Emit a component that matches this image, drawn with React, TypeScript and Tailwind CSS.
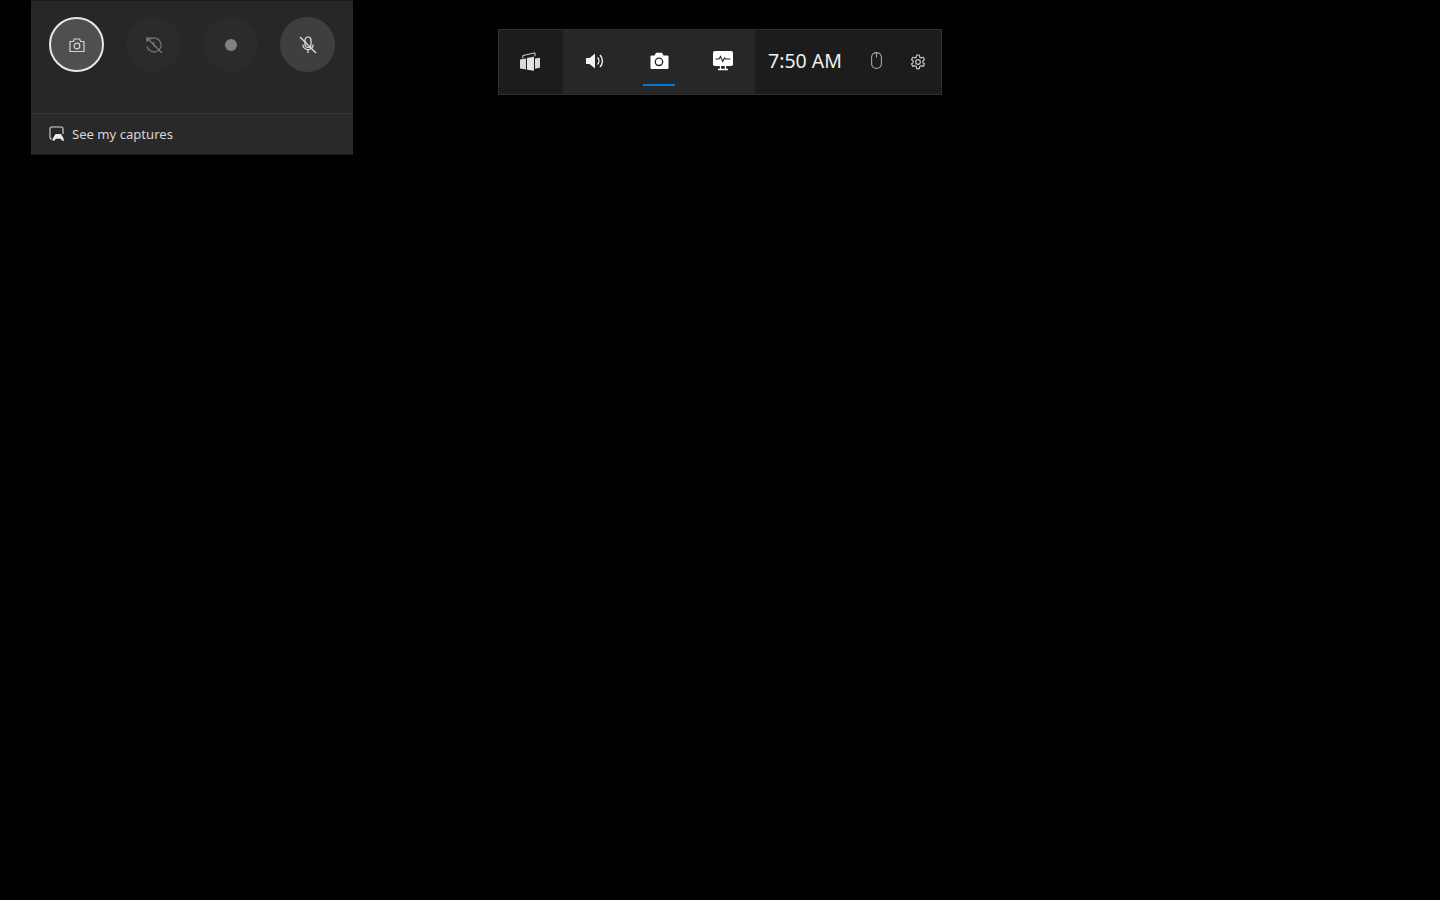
import React from 'react';

function CameraOutline() {
  return (
    <svg width="16" height="16" viewBox="0 0 16 16" fill="none" stroke="#d2d2d2" strokeWidth="1.2">
      <path d="M1 4.500h3.400l1-2.500h5.200l1 2.500H15v10H1z" strokeLinejoin="round" />
      <circle cx="8" cy="9" r="2.800" />
    </svg>
  );
}

function ReplayOff() {
  return (
    <svg width="18" height="18" viewBox="0 0 18 18" fill="none" stroke="#787878" strokeWidth="1.200">
      <path d="M5 3.200A7 7 0 1 1 2.200 10.500" />
      <path d="M1 1.500h5.500L1.500 6.500z" fill="#787878" stroke="none" />
      <path d="M8.800 6v3.500l2.300 1.500" />
      <path d="M2 2l15 15" />
    </svg>
  );
}

function MicOff() {
  return (
    <svg width="18" height="18" viewBox="0 0 18 18" fill="none" stroke="#e2e2e2" strokeWidth="1.200">
      <rect x="6" y="1" width="6" height="10.500" rx="3" />
      <path d="M3.800 8.500a5.200 5.200 0 0 0 10.400 0" />
      <path d="M9 13.700v3.300" />
      <path d="M1 1l16 16" />
    </svg>
  );
}

function CapturesIcon() {
  return (
    <svg width="16" height="16" viewBox="0 0 16 16" fill="none">
      <path d="M3.500 13H2.400A1.400 1.400 0 0 1 1 11.600V2.400A1.400 1.400 0 0 1 2.400 1h10.200A1.400 1.400 0 0 1 14 2.400V8" stroke="#d8d8d8" strokeWidth="1.100" />
      <path d="M6.500 8h5.500l2.300 3.800.7 3.200-2-.4-1.500-1.800H7l-1.500 1.800-2 .4.700-3.200z" fill="#ececec" />
    </svg>
  );
}

function WidgetsIcon() {
  return (
    <svg width="20" height="20" viewBox="0 0 20 20" fill="none">
      <path d="M0 7.500l6-1v11l-6-1z" fill="#dadada" />
      <path d="M7 6l7-1.200v14L7 17.700z" fill="#e4e4e4" />
      <path d="M15 6.500l5-.8v10l-5 1z" fill="#dadada" />
      <path d="M2.800 6.400V3.600L15 .8v3.500" stroke="#d4d4d4" strokeWidth="1" />
    </svg>
  );
}

function SpeakerIcon() {
  return (
    <svg width="20" height="18" viewBox="0 0 20 18" fill="none">
      <path d="M1 6h3.500L10 1.500v15L4.500 12H1z" fill="#f2f2f2" />
      <path d="M12.500 5.500a5 5 0 0 1 0 7" stroke="#f2f2f2" strokeWidth="1.400" />
      <path d="M15 3a8.600 8.600 0 0 1 0 12" stroke="#f2f2f2" strokeWidth="1.400" />
    </svg>
  );
}

function CameraFilled() {
  return (
    <svg width="20" height="18" viewBox="0 0 20 18" fill="none">
      <path d="M1.500 3.500h4l1.500-2.800h6l1.500 2.800h4a1 1 0 0 1 1 1V16a1 1 0 0 1-1 1h-16a1 1 0 0 1-1-1V4.500a1 1 0 0 1 1-1z" fill="#ffffff" />
      <circle cx="10" cy="9.800" r="3.700" stroke="#272727" strokeWidth="1.300" />
    </svg>
  );
}

function PerfIcon() {
  return (
    <svg width="20" height="20" viewBox="0 0 20 20" fill="none">
      <rect x="0" y="0" width="20" height="15" rx="1.800" fill="#ffffff" />
      <path d="M2.500 8h3.500l1.500-2.500 2.200 5 1.800-3.500 1 1h5" stroke="#272727" strokeWidth="1.100" />
      <path d="M7.500 15v3M12.500 15v3M5 18.500h10" stroke="#ffffff" strokeWidth="1.300" />
    </svg>
  );
}

function MouseIcon() {
  return (
    <svg width="11" height="17" viewBox="0 0 11 17" fill="none" stroke="#a4a4a4" strokeWidth="1.100">
      <path d="M.6 5.100a4.900 4.500 0 0 1 9.800 0v6.800a4.900 4.500 0 0 1-9.800 0z" />
      <path d="M5.500 .6v5" />
    </svg>
  );
}

function GearIcon() {
  return (
    <svg width="16" height="16" viewBox="0 0 24 24" fill="none" stroke="#c4c4c4" strokeWidth="1.800" strokeLinejoin="round">
      <path d="M10 1.500h4l.6 3.200 2.100 1.200 3-1.100 2 3.500-2.400 2.100v2.600l2.400 2.100-2 3.500-3-1.100-2.100 1.200-.6 3.300h-4l-.6-3.300-2.100-1.200-3 1.100-2-3.500 2.400-2.100v-2.600L2.300 8.300l2-3.500 3 1.100 2.100-1.200z" />
      <circle cx="12" cy="12" r="3.500" />
    </svg>
  );
}

export default function App() {
  return (
    <div className="min-h-[900px] bg-black flex items-start pl-[31px] font-['Noto_Sans',sans-serif]">
      {/* capture widget */}
      <div className="w-[322px] h-[155px] flex flex-col bg-[#272727] border-t border-t-[#1a1a1a] border-b border-b-[#1a1a1a]">
        <div className="h-[112px] flex items-start gap-[22px] pl-[18px] pt-[16px]">
          <button className="w-[55px] h-[55px] rounded-full bg-[#4f4f4f] border-2 border-[#e8e8e8] flex items-center justify-center">
            <CameraOutline />
          </button>
          <button className="w-[55px] h-[55px] rounded-full bg-[#2b2b2b] flex items-center justify-center">
            <ReplayOff />
          </button>
          <button className="w-[55px] h-[55px] rounded-full bg-[#2b2b2b] flex items-center justify-center">
            <span className="w-[12px] h-[12px] rounded-full bg-[#808080]" />
          </button>
          <button className="w-[55px] h-[55px] rounded-full bg-[#3f3f3f] flex items-center justify-center">
            <MicOff />
          </button>
        </div>
        <div className="flex-1 border-t border-[#333333] bg-[#292929] flex items-center pl-[18px] gap-[7px]">
          <CapturesIcon />
          <span className="text-[13.1px] text-[#d6d6d6] pt-[2px]">See my captures</span>
        </div>
      </div>

      {/* game bar */}
      <div className="ml-[145px] mt-[29px] h-[66px] w-[444px] flex border border-[#2e2e2e] bg-[#1c1c1c]">
        <div className="w-[64px] pr-[2px] flex items-center justify-center">
          <WidgetsIcon />
        </div>
        <div className="w-[192px] bg-[#272727] flex">
          <div className="w-[64px] pb-[3px] flex items-center justify-center">
            <SpeakerIcon />
          </div>
          <div className="relative w-[64px] pb-[3px] flex items-center justify-center">
            <CameraFilled />
            <span className="absolute left-[16px] bottom-[8px] w-[32px] h-[2px] bg-[#0078d4]" />
          </div>
          <div className="w-[64px] pb-[3px] flex items-center justify-center">
            <PerfIcon />
          </div>
        </div>
        <div className="flex-1 flex items-center pl-[13px]">
          <span className="text-[19.5px] text-[#f0f0f0] w-[73px] pb-[3px] whitespace-nowrap">7:50 AM</span>
          <span className="ml-[30px] pb-[3px] flex"><MouseIcon /></span>
          <span className="ml-[28px] flex"><GearIcon /></span>
        </div>
      </div>
    </div>
  );
}
